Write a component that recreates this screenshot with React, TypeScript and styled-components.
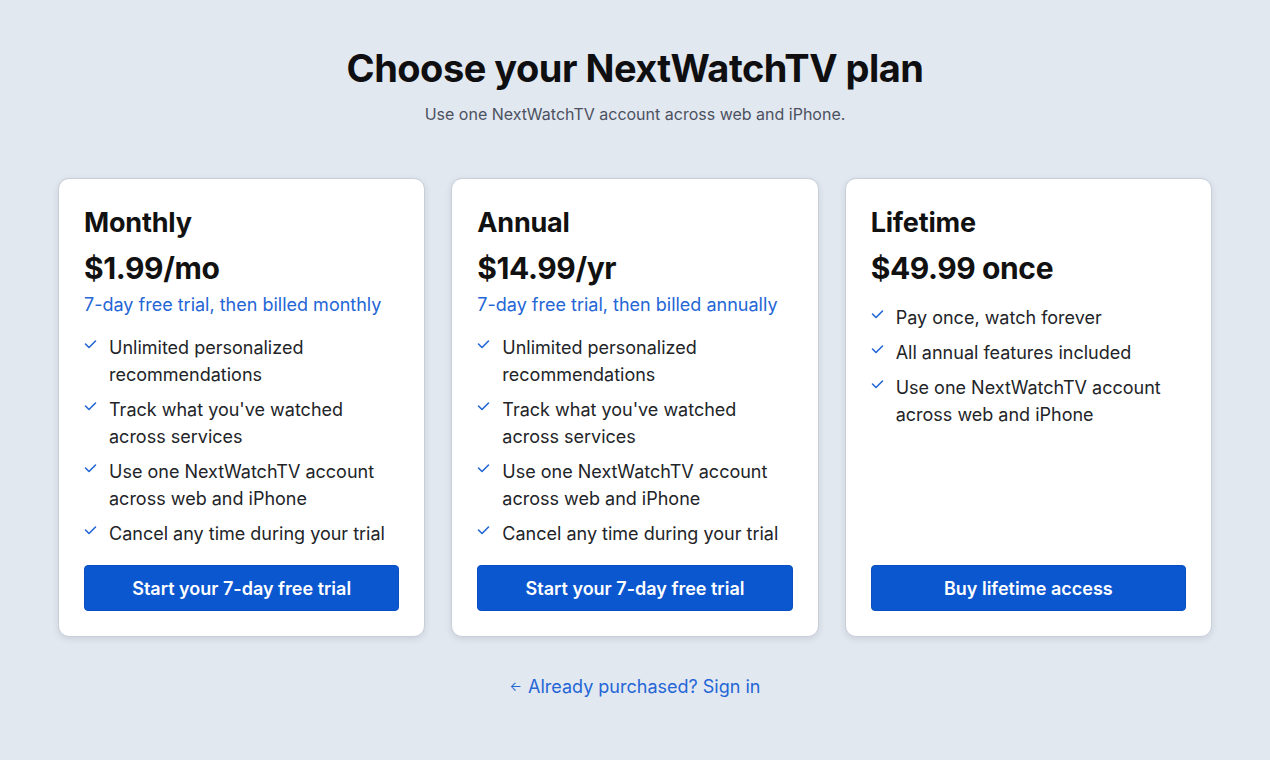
import React from 'react';
import styled, { createGlobalStyle } from 'styled-components';

const GlobalStyle = createGlobalStyle`
  * {
    box-sizing: border-box;
  }
  body {
    margin: 0;
    background: #e2e8f0;
    font-family: Inter, 'Noto Sans', 'Liberation Sans', sans-serif;
    color: #141414;
  }
`;

const Page = styled.main`
  padding: 44px 0 40px;
  display: flex;
  flex-direction: column;
  align-items: center;
`;

const Heading = styled.h1`
  margin: 0;
  font-size: 38px;
  line-height: 48px;
  font-weight: 700;
  letter-spacing: -0.5px;
  color: #0f0f12;
`;

const Lead = styled.p`
  margin: 10px 0 0;
  font-size: 16px;
  line-height: 24px;
  color: #4b5160;
`;

const Grid = styled.div`
  margin-top: 52px;
  width: 1154px;
  display: grid;
  grid-template-columns: repeat(3, 1fr);
  gap: 26px;
`;

const Card = styled.section`
  background: #ffffff;
  border: 1px solid #c8cfd9;
  border-radius: 11px;
  box-shadow: 0 2px 6px rgba(30, 41, 59, 0.12);
  padding: 26px 25px 25px;
  display: flex;
  flex-direction: column;
`;

const PlanName = styled.h2`
  margin: 0;
  font-size: 27px;
  line-height: 36px;
  font-weight: 700;
  letter-spacing: -0.2px;
  color: #111;
`;

const Price = styled.div`
  margin-top: 8px;
  font-size: 30px;
  line-height: 39px;
  font-weight: 700;
  letter-spacing: -0.4px;
  color: #111;
`;

const Note = styled.div`
  margin-top: 3px;
  font-size: 18px;
  line-height: 27px;
  color: #2466d6;
`;

const Features = styled.ul<{ $gap: number }>`
  list-style: none;
  margin: ${(p) => p.$gap}px 0 0;
  padding: 0;
  display: flex;
  flex-direction: column;
  gap: 8px;
`;

const Feature = styled.li`
  display: flex;
  gap: 12px;
  font-size: 18px;
  line-height: 27px;
  color: #222428;
`;

const Check = styled.svg`
  flex: none;
  width: 13px;
  height: 13px;
  margin-top: 4px;
`;

const Cta = styled.button`
  margin-top: auto;
  height: 46px;
  width: 100%;
  border: 1px solid #0a4fbf;
  border-radius: 4px;
  background: #0b57d0;
  color: #ffffff;
  font-family: inherit;
  font-size: 18px;
  font-weight: 600;
  cursor: pointer;
`;

const Spacer = styled.div`
  height: 18px;
  flex: none;
`;

const SignIn = styled.a`
  margin-top: 36px;
  font-size: 18px;
  line-height: 27px;
  color: #2466d6;
  text-decoration: none;
  display: flex;
  align-items: center;
  gap: 6px;
`;

const Arrow = styled.span`
  font-size: 13px;
`;

const CheckIcon = () => (
  <Check viewBox="0 0 13 13">
    <polyline points="1.5,6 5,9.5 11.5,3" fill="none" stroke="#2466d6" strokeWidth="1.6" strokeLinecap="round" strokeLinejoin="round" />
  </Check>
);

interface Plan {
  name: string;
  price: string;
  note?: string;
  features: string[];
  cta: string;
}

const trialFeatures = [
  'Unlimited personalized recommendations',
  "Track what you've watched across services",
  'Use one NextWatchTV account across web and iPhone',
  'Cancel any time during your trial',
];

const plans: Plan[] = [
  {
    name: 'Monthly',
    price: '$1.99/mo',
    note: '7-day free trial, then billed monthly',
    features: trialFeatures,
    cta: 'Start your 7-day free trial',
  },
  {
    name: 'Annual',
    price: '$14.99/yr',
    note: '7-day free trial, then billed annually',
    features: trialFeatures,
    cta: 'Start your 7-day free trial',
  },
  {
    name: 'Lifetime',
    price: '$49.99 once',
    features: [
      'Pay once, watch forever',
      'All annual features included',
      'Use one NextWatchTV account across web and iPhone',
    ],
    cta: 'Buy lifetime access',
  },
];

const App = () => {
  return (
    <>
      <GlobalStyle />
      <Page>
        <Heading>Choose your NextWatchTV plan</Heading>
        <Lead>Use one NextWatchTV account across web and iPhone.</Lead>
        <Grid>
          {plans.map((plan) => (
            <Card key={plan.name}>
              <PlanName>{plan.name}</PlanName>
              <Price>{plan.price}</Price>
              {plan.note && <Note>{plan.note}</Note>}
              <Features $gap={plan.note ? 16 : 16}>
                {plan.features.map((f) => (
                  <Feature key={f}>
                    <CheckIcon />
                    <span>{f}</span>
                  </Feature>
                ))}
              </Features>
              <Spacer />
              <Cta>{plan.cta}</Cta>
            </Card>
          ))}
        </Grid>
        <SignIn href="#">
          <Arrow>←</Arrow>
          Already purchased? Sign in
        </SignIn>
      </Page>
    </>
  );
};

export default App;
